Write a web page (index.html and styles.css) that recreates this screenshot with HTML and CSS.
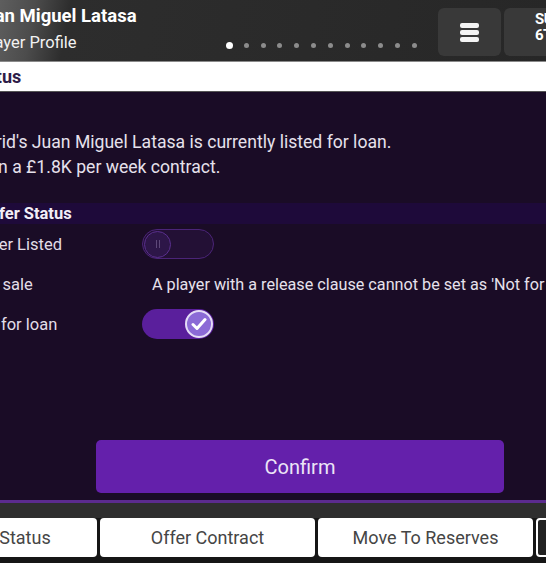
FILE: index.html
```html
<!DOCTYPE html>
<html lang="en">
<head>
    <meta charset="UTF-8">
    <title>Player Profile - Status</title>
    <link rel="stylesheet" href="styles.css">
</head>
<body>
    <div class="screen">
        <header class="top-bar">
            <div class="player-title">
                <div class="player-name">Juan Miguel Latasa</div>
                <div class="player-sub">Player Profile</div>
            </div>
            <div class="pager">
                <span class="dot active"></span>
                <span class="dot"></span>
                <span class="dot"></span>
                <span class="dot"></span>
                <span class="dot"></span>
                <span class="dot"></span>
                <span class="dot"></span>
                <span class="dot"></span>
                <span class="dot"></span>
                <span class="dot"></span>
                <span class="dot"></span>
                <span class="dot"></span>
            </div>
            <button class="menu-btn" aria-label="Menu">
                <span></span><span></span><span></span>
            </button>
            <div class="date-btn">
                <div>SUN</div>
                <div>6TH</div>
            </div>
        </header>

        <div class="tab-title">Status</div>

        <main class="panel">
            <div class="summary">
                <div class="line-one">Madrid's Juan Miguel Latasa is currently listed for loan.</div>
                <div class="line-two">On a £1.8K per week contract.</div>
            </div>

            <div class="section-head">Transfer Status</div>

            <div class="row">
                <div class="label">Transfer Listed</div>
                <div class="toggle off"><span class="knob"><i></i><i></i></span></div>
            </div>
            <div class="row">
                <div class="label sale">Not for sale</div>
                <div class="note">A player with a release clause cannot be set as 'Not for sale'</div>
            </div>
            <div class="row">
                <div class="label">Listed for loan</div>
                <div class="toggle on">
                    <span class="knob">
                        <svg width="16" height="14" viewBox="0 0 16 14"><path d="M2 7.5 L6 11.5 L14 2.5" fill="none" stroke="#fff" stroke-width="3" stroke-linecap="round" stroke-linejoin="round"/></svg>
                    </span>
                </div>
            </div>

            <div class="confirm-wrap">
                <button class="confirm">Confirm</button>
            </div>
        </main>

        <div class="strip"></div>

        <nav class="actions">
            <button class="action">Transfer Status</button>
            <button class="action">Offer Contract</button>
            <button class="action">Move To Reserves</button>
            <button class="action dark">More</button>
        </nav>
    </div>
</body>
</html>
```

FILE: styles.css
```css
body {
    margin: 0;
    width: 546px;
    height: 563px;
    overflow: hidden;
    background: #1c1c1c;
    font-family: Roboto, "Liberation Sans", sans-serif;
}
.screen {
    width: 546px;
    height: 563px;
    display: flex;
    flex-direction: column;
    overflow: hidden;
}

/* header */
.top-bar {
    height: 61px;
    border-bottom: 1px solid #8a8a8a;
    background: linear-gradient(100deg, #5e5e5e 0px, #4c4c4c 35px, #2d2d2d 70px, #272727 100%);
    display: flex;
    align-items: center;
    position: relative;
}
.player-title {
    margin-left: -20px;
    color: #fff;
    width: 246px;
    flex-shrink: 0;
}
.player-name {
    font-size: 18.5px;
    font-weight: 700;
    line-height: 22px;
    margin-top: -3px;
    margin-left: -6px;
}
.player-sub {
    font-size: 16.5px;
    line-height: 20px;
    margin-top: 6px;
    color: #f2f2f2;
}
.pager {
    display: flex;
    align-items: center;
    gap: 11.8px;
    margin-top: 29px;
}
.dot {
    width: 5px;
    height: 5px;
    border-radius: 50%;
    background: #8c8c8c;
}
.dot.active {
    width: 7px;
    height: 7px;
    background: #fff;
    margin-right: -1px;
}
.menu-btn {
    position: absolute;
    left: 438px;
    top: 8px;
    width: 63px;
    height: 48px;
    border: none;
    border-radius: 6px;
    background: #393939;
    display: flex;
    flex-direction: column;
    align-items: center;
    justify-content: center;
    gap: 2px;
    padding: 0;
}
.menu-btn span {
    width: 19px;
    height: 5px;
    border-radius: 2px;
    background: #f4f4f4;
}
.date-btn {
    position: absolute;
    left: 504px;
    top: 8px;
    width: 80px;
    height: 48px;
    border-radius: 6px;
    background: #393939;
    color: #fff;
    font-size: 15px;
    font-weight: 700;
    line-height: 16px;
    letter-spacing: -0.5px;
    padding: 3px 0 0 31px;
    box-sizing: border-box;
}

/* tab title */
.tab-title {
    height: 29px;
    background: #fff;
    border-bottom: 1px solid #555;
    color: #2e1d48;
    font-size: 18px;
    font-weight: 700;
    line-height: 29px;
    text-indent: -31px;
}

/* main panel */
.panel {
    flex: 1;
    background: #1a0c26;
    margin-left: -48px;
    display: flex;
    flex-direction: column;
    border-bottom: 3px solid #5b2b8e;
}
.summary {
    margin-top: 38px;
    color: #e6e1ec;
    font-size: 17.6px;
    line-height: 25px;
    white-space: nowrap;
}
.line-one {
    margin-left: 9px;
}
.line-two {
    margin-left: 34px;
}
.section-head {
    margin-top: 23px;
    height: 21px;
    background: #1e0a3a;
    color: #f2eef7;
    font-size: 16.5px;
    font-weight: 700;
    line-height: 21px;
    padding-left: 5px;
}
.row {
    height: 40px;
    display: flex;
    align-items: center;
}
.row:first-of-type {
    margin-top: 1px;
}
.label {
    width: 190px;
    flex-shrink: 0;
    color: #e2dde8;
    font-size: 16.5px;
}
.label.sale {
    text-indent: -5px;
}
.note {
    margin-left: 10px;
    color: #e6e1ec;
    font-size: 16.2px;
    white-space: nowrap;
}
.toggle {
    width: 72px;
    height: 30px;
    border-radius: 15px;
    box-sizing: border-box;
    display: flex;
    align-items: center;
    padding: 0 1px;
}
.toggle.off {
    background: #231035;
    border: 1px solid #4b2478;
}
.toggle.on {
    background: #5a1f9c;
    justify-content: flex-end;
}
.knob {
    width: 27px;
    height: 27px;
    border-radius: 50%;
    box-sizing: border-box;
    display: flex;
    align-items: center;
    justify-content: center;
    gap: 2px;
}
.toggle.off .knob {
    background: #2d1648;
    border: 1px solid #5a2f8e;
}
.toggle.off .knob i {
    width: 1px;
    height: 8px;
    background: #5e4879;
}
.toggle.on .knob {
    width: 28px;
    height: 28px;
    background: #8b6ad6;
    border: 2px solid #e4dcf6;
}
.confirm-wrap {
    margin-top: auto;
    padding: 0 42px 7px 144px;
}
.confirm {
    width: 100%;
    height: 53px;
    border: none;
    border-radius: 5px;
    background: #6420ab;
    color: #ece4f7;
    font-family: Roboto, "Liberation Sans", sans-serif;
    font-size: 20px;
}

/* bottom actions */
.strip {
    height: 15px;
    background: #2e2e2e;
}
.actions {
    height: 45px;
    display: flex;
    gap: 3px;
    margin-left: -118px;
    background: #161616;
}
.action {
    width: 215px;
    height: 39px;
    flex-shrink: 0;
    border: none;
    border-radius: 4px;
    background: #fff;
    color: #454545;
    font-family: Roboto, "Liberation Sans", sans-serif;
    font-size: 18px;
    padding: 0;
}
.action.dark {
    background: #222;
    border: 2px solid #fff;
    color: #fff;
}
```
